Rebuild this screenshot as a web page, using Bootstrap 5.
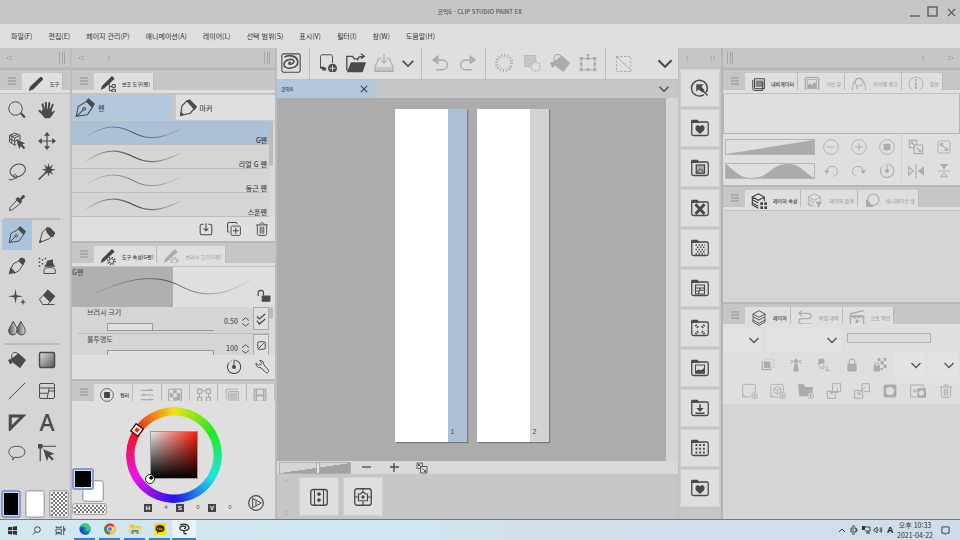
<!DOCTYPE html>
<html lang="ko">
<head>
<meta charset="utf-8">
<meta name="viewport" content="width=device-width, initial-scale=1">
<title>코믹6 - CLIP STUDIO PAINT EX</title>
<link href="https://cdn.jsdelivr.net/npm/bootstrap@5.3.0/dist/css/bootstrap.min.css" rel="stylesheet">
<style>
:root{--bar:#c6c6c6;--panel:#dfdfdf;--body:#d5d5d5;--ink:#4a4a4a;--dim:#ababab;--sel:#abc1d7;--edge:#b5b5b5}
body{font:500 7px/10px "Noto Sans CJK KR",sans-serif;color:#555;background:var(--body);min-height:100vh}
button,select,input{font:inherit;color:inherit;border:0;background:none;padding:0;border-radius:0}
button{display:flex;align-items:center;justify-content:center;flex:none}
svg{fill:none;stroke:currentColor;stroke-width:1.3;flex:none;display:block;overflow:visible}
.fs{fill:currentColor;stroke:none}
.s8{width:8px;height:8px}.s12{width:12px;height:12px}.s14{width:14px;height:14px}.s16{width:16px;height:16px}.s18{width:18px;height:18px}.s20{width:20px;height:20px}
.ink{color:var(--ink)}.dim{color:var(--dim)}
.titlebar{height:24px;background:var(--bar);font-size:6px}
.third{flex:1 1 0}
.winbtns{gap:2px;padding-right:1px}
.winbtns button{width:16px;height:20px}
.menubar{height:24px;background:var(--panel);padding-left:3px;font-weight:400}
.menubar a{color:#333;text-decoration:none;padding:0 8px}
.dockbar{height:20px;background:var(--bar);color:#999;padding:0 5px;border-bottom:1px solid #bebebe}
.grip{width:6px;height:12px;border:solid #a5a5a5;border-width:0 1px;background:linear-gradient(#a5a5a5,#a5a5a5) center/1px 100% no-repeat}
.tools{width:72px;border-right:2px solid #bcbcbc}
.sub{width:205px;background:var(--bar);border-right:2px solid #bcbcbc}
.mats{width:45px;background:var(--bar);border-left:1px solid #bebebe;border-right:2px solid var(--edge)}
.right{width:237px}
.tabs{height:22px;background:var(--bar);border-top:2px solid #b8b8b8;padding-left:4px}
.ham{width:16px;height:18px;margin-right:2px;color:#8c8c8c}
.ptab{height:17px;background:var(--panel);border-right:1px solid #bbb;padding:4px 3px 0 6px;gap:6px;font-size:5px;line-height:8px;color:#aaa;white-space:nowrap;overflow:hidden}
.ptab.on{color:#444;overflow:visible}
.ptab svg{position:relative;z-index:1}
.strip{height:4px;background:var(--panel);border-bottom:1px solid #c2c2c2}
.toolgrid{display:grid;grid-template-columns:30px 30px;row-gap:1px;padding-left:2px}
.toolgrid.first{padding-top:1px}
.toolgrid button{width:30px;height:30px}
.toolgrid .on{background:#abc3db}
.glyph{font:500 23px/24px "Noto Sans",sans-serif}
.rule{height:2px;background:#bbb;margin:0 10px 0 4px}
.swatches{height:29px;padding:0 0 1px 1px}
.swatches .sw{width:20px}
.sw{border:1px solid #aaa;border-radius:3px;padding:1px}
.sw span{display:block;width:100%;height:100%}
.sw.on{border:2px solid #7f9cd8}
.pair{height:34px;margin-bottom:1px}
.pair .sw{width:22px;height:22px;position:absolute}
.pair .front{left:0;top:0}
.pair .back{right:3px;bottom:0}
.clear{width:35px;height:12px}
.check{background:conic-gradient(#777 25%,#fff 0 50%,#777 0 75%,#fff 0) 0 0/4px 4px}
.subtabs{padding:1px 0}
.subtabs button{height:25px;flex:1 1 0;justify-content:flex-start;gap:3px;padding-left:3px;background:var(--panel)}
.subtabs button.on{background:#b0c7dc}
.brushes{height:96px;overflow:hidden;background:var(--body)}
.brushes button{width:100%;height:24px;border-bottom:1px solid #bdbdbd;justify-content:space-between;align-items:flex-end;padding:0 2px 0 12px;line-height:8px;color:#444}
.brushes .on{background:var(--sel)}
.sbar{width:6px;background:#dadada}
.sbar span{display:block;width:4px;background:#bbb;border-radius:2px}
.acts{height:24px;background:var(--panel);gap:10px;padding-right:4px}
.preview{height:40px;background:linear-gradient(90deg,#b0b0b0 50%,var(--panel) 0)}
.props{height:48px;overflow:hidden;background:var(--body)}
.prop{height:27px;border-bottom:1px solid #bbb;margin-left:6px;padding-left:9px}
.meter{width:107px;height:8px;border-bottom:1px solid #999;appearance:none;margin:6px 0 0 20px}
.meter::-webkit-slider-thumb{appearance:none;width:0}
.meter.half{background:linear-gradient(#dfdfdf,#dfdfdf) 1px 1px/44px 7px no-repeat,linear-gradient(#999,#999) 0 0/46px 100% no-repeat}
.meter.full{background:#dfdfdf;border:1px solid #999}
.num{width:24px;text-align:right;margin-top:2px}
.sq{width:16px;height:23px;border:1px solid #aaa;background:var(--panel)}
.cpanel{background:var(--panel);padding-top:6px}
.side{width:38px}
.ring{width:96px;height:96px}
.ring .hue{width:96px;height:96px;border-radius:50%;background:conic-gradient(#eee415,#22e822,#1ee6e6,#2212ee,#ee12ee,#f01515,#eee415);-webkit-mask:radial-gradient(circle,transparent 39px,#000 40px)}
.sv{left:24px;top:24px;width:48px;height:48px;border:1px solid #999;background:linear-gradient(transparent,#000),linear-gradient(90deg,#e8e8e8,#ff1a0a)}
.huemark{left:6px;top:18px;width:10px;height:10px;border:1px solid #111;background:#f21;box-shadow:inset 0 0 0 2px #fff;transform:rotate(37deg)}
.svmark{left:19px;top:67px;width:10px;height:10px;border-radius:50%;border:1px solid #222;background:radial-gradient(circle at 65% 35%,#111 20%,#fff 30%)}
.hsv{width:96px;margin-left:37px;font:6px/9px "Liberation Sans",sans-serif}
.hsv b{background:#444;color:#fff;width:8px;height:8px;text-align:center;line-height:8px;flex:none}
.hsv span{width:24px;padding-left:4px;text-align:center;flex:none}
.topbar{height:32px;background:var(--panel);border-bottom:1px solid #c0c0c0}
.grp{height:31px;border-right:1px solid #bcbcbc;padding:0 3px 0 4px}
.grp button{width:28px;height:30px}
.doctabs{height:18px;background:var(--bar)}
.doctab{width:99px;background:#b0c7dc;font-size:5px;padding:0 4px;color:#444}
.stage{background:#acacac;padding:11px 0 19px;gap:10px}
.page{width:72px;background:#fff;box-shadow:1px 1px 1px #777}
.page span{width:19px;background:#d3d3d3;padding:0 0 6px 3px;font:7px/9px "Liberation Sans",sans-serif;color:#444}
.page.on span{background:var(--sel)}
.vbar{width:12px;background:var(--body)}
.zoombar{height:13px;background:#d9d9d9;gap:10px;padding-left:2px}
.zoombar input{appearance:none;width:72px;height:12px;border:1px solid #b0b0b0;background:linear-gradient(to bottom right,#d5d5d5 50%,#a3a3a3 51%);margin-right:-4px}
.zoombar input::-webkit-slider-thumb{appearance:none;width:4px;height:12px;background:#e5e5e5;border:1px solid #aaa}
.zoombar button{width:18px}
.shelf{height:45px;background:var(--bar);padding:3px 0 3px 6px;gap:4px}
.shelf .big{width:40px;height:39px;background:var(--panel);border:1px solid #d0d0d0}
.mats .mat{width:40px;height:38px;background:var(--panel);border:1px solid #d2d2d2}
.mlist{gap:2px;padding-top:1px}
.navview{height:40px;background:var(--panel);border:1px solid var(--edge);border-top:0}
.navctl{height:51px;background:var(--panel);padding:1px 2px 0;color:var(--dim)}
.navrow{height:24px}
.slope{width:90px;height:16px;border:1px solid #b5b5b5;position:relative;flex:none;margin-right:2px}
.slope input{position:absolute;inset:0;width:100%;height:100%;opacity:0}
.slope svg{width:100%;height:100%}
.navrow button{width:28px}
.gapbox{height:91px}
.lay{background:var(--panel);height:80px;padding:4px 2px 0 0}
.drop{position:relative;background:#e3e3e3;height:24px}
.drop select{width:100%;height:100%;appearance:none}
.drop svg{position:absolute;right:3px;top:7px;pointer-events:none;color:#555}
.opac{width:84px;height:10px;appearance:none;border:1px solid #b0b0b0;background:#dcdcdc}
.opac::-webkit-slider-thumb{appearance:none;width:0}
.lay button{width:28px;height:26px}
.taskbar{height:21px;background:linear-gradient(90deg,#d2e7f0,#cfe5ef 45%,#d3dfeb 55%,#cfdcea);border-top:1px solid #777;color:#333}
.taskbar button{width:24px;height:20px}
.taskbar .run{border-bottom:2px solid #2a83cc;width:21px;margin:0 2px}
.taskbar .run.on{background:#e9f2f7;width:24px;margin:0}
.taskbar .tray button{width:12px}
.taskbar .tray .note{width:22px}
.tray .ime{font:bold 9px/10px "Noto Sans",sans-serif}
.clock{line-height:10px;width:38px;font-weight:400}
</style>
<script src="https://cdn.jsdelivr.net/npm/bootstrap@5.3.0/dist/js/bootstrap.bundle.min.js"></script>
</head>
<body class="d-flex flex-column overflow-hidden">
<svg width="0" height="0" class="position-absolute" aria-hidden="true">
<defs><linearGradient id="gr"><stop stop-color="#555"/><stop offset="1" stop-color="#ddd"/></linearGradient>
<linearGradient id="gd" x1="0" y1="0" x2="1" y2="1"><stop stop-color="#ddd"/><stop offset="1" stop-color="#555"/></linearGradient>
<linearGradient id="st" gradientUnits="userSpaceOnUse" x1="0" x2="100" y1="0" y2="0"><stop stop-color="#555" stop-opacity=".1"/><stop offset=".5" stop-color="#444"/><stop offset="1" stop-color="#555" stop-opacity=".1"/></linearGradient>
<linearGradient id="sp" gradientUnits="userSpaceOnUse" x1="0" x2="165" y1="0" y2="0"><stop stop-color="#555" stop-opacity=".1"/><stop offset=".5" stop-color="#444"/><stop offset="1" stop-color="#555" stop-opacity=".1"/></linearGradient></defs>
<symbol id="ham" viewBox="0 0 8 8"><path d="M0 1h8M0 4h8M0 7h8" stroke-width=".9"/></symbol>
<symbol id="ll" viewBox="0 0 8 8"><path d="M4 2L2 4l2 2M7 2L5 4l2 2" stroke-width=".8"/></symbol>
<symbol id="rr" viewBox="0 0 8 8"><path d="M1 2l2 2-2 2M4 2l2 2-2 2" stroke-width=".8"/></symbol>
<symbol id="l1" viewBox="0 0 8 8"><path d="M5 2L3 4l2 2" stroke-width=".8"/></symbol>
<symbol id="r1" viewBox="0 0 8 8"><path d="M3 2l2 2-2 2" stroke-width=".8"/></symbol>
<symbol id="up" viewBox="0 0 8 8"><path d="M2 5l2-2 2 2" stroke-width=".9"/></symbol>
<symbol id="dd" viewBox="0 0 8 8"><path d="M2 2l2 2 2-2M2 5l2 2 2-2" stroke-width=".9"/></symbol>
<symbol id="chev" viewBox="0 0 16 10"><path d="M2 2l6 6 6-6" stroke-width="1.800"/></symbol>
<symbol id="x" viewBox="0 0 10 10"><path d="M1 1l8 8M9 1L1 9" stroke-width="1.400"/></symbol>
<symbol id="glass" viewBox="0 0 24 24"><circle cx="10" cy="10" r="9"/><path d="M17 16l5.500 6" stroke-width="3"/></symbol>
<symbol id="hand" viewBox="0 0 24 24"><path d="M9 14L6 4.500M11 13l-.6-10.500M14 13l1-10.300M16 14l3.500-9M7 18l-5-5" stroke-width="2.700" stroke-linecap="round"/><path class="fs" d="M6 11l12-1 .5 5 3-2.500 1 1.200-5 7.300-2 2H9l-5-7z"/></symbol>
<symbol id="cube" viewBox="0 0 24 24"><path d="M9 1.500l7 3v7M9 1.500l-7 3v9l7 4 2-1M2 4.500L9 8l7-3.500M9 8v9M5 3v12M2 9l7 3.500L14 10M13 3L6 6"/><path class="fs" d="M11 10l12 5-4 1.700 4 4.300-2 2-4-4.500-2 4z"/></symbol>
<symbol id="move" viewBox="0 0 24 24"><path d="M12 3v18M3 12h18" stroke-width="1.600"/><path class="fs" d="M12 0l4 5H8zM12 24l4-5H8zM0 12l5-4v8zM24 12l-5-4v8z"/></symbol>
<symbol id="lasso" viewBox="0 0 24 24"><ellipse cx="13" cy="10" rx="10.500" ry="8" transform="rotate(-25 13 10)"/><path d="M12 19c1-4-6-5-5-1 1 3 6 3 5 0M9 20c-1 2.500-5 3-8 2"/></symbol>
<symbol id="wand" viewBox="0 0 24 24"><path d="M1 22L12 11" stroke-width="1.800"/><path class="fs" d="M14 0l1.500 5.500L20 2l-2.500 5.500 6 1.500-6 1.500L20 16l-4.500-3.500L14 18l-1.500-5.500L8 16l2.500-5.500L5 9l5.500-1.500L8 2l4.500 3.500z"/></symbol>
<symbol id="drop" viewBox="0 0 24 24"><path d="M12 8l4.500 4.500L6 21l-4 1 .8-4z"/><path class="fs" d="M16 6l3-4c2-2 5 1 3 3l-4 3 1 2-3 3-6-6 3-3z"/></symbol>
<symbol id="pen" viewBox="0 0 24 24"><path d="M1.500 22L4 10l10-6 7 7-6 9zM2 22l8-8"/><circle cx="11" cy="13" r="1.700"/><path class="fs" d="M13 4l3-4 8 7-3 5z"/></symbol>
<symbol id="marker" viewBox="0 0 24 24"><path d="M2 22L6 8l7-6 9 8-7 7z"/><path class="fs" d="M11 2h5l7 7-3 6-4-1-5-6zM1 23l5-2-3-3z"/></symbol>
<symbol id="mpen" viewBox="0 0 24 24"><path d="M2 22L4 9l7-7 11 9-7 8z" stroke-width="1.600"/><path class="fs" d="M10 3l4-3 10 10-3 5zM1 23l6-2-4-4z"/></symbol>
<symbol id="brush" viewBox="0 0 24 24"><path d="M4 16l3-7 8-4 5 5-5 8-7 4"/><path class="fs" d="M15 3c3-4 9-1 8 3l-3 5-6-5zM1 23l2-9 4 3 3 4z"/></symbol>
<symbol id="spray" viewBox="0 0 24 24"><path d="M8 22v-5c0-4 15-4 15 0v5z"/><path class="fs" d="M12 5l8-2v5l3 5H8l3-4zM1 1h2v2H1zM5 3h2v2H5zM1 6h2v2H1zM5 8h2v2H5zM9 1h2v2H9zM1 11h2v2H1z"/></symbol>
<symbol id="spark" viewBox="0 0 24 24"><path class="fs" d="M10 1l1.500 8.500L20 11l-8.500 1.500L10 21l-1.500-8.500L0 11l8.500-1.500zM20 14l1 3.500 3 1-3 1-1 3.500-1-3.500-3-1 3-1z"/></symbol>
<symbol id="eraser" viewBox="0 0 24 24"><path d="M2 15l11-12 9 8-9 11H6zM11 22h11"/><path class="fs" d="M7 10l6-8 10 9-7 8z"/></symbol>
<symbol id="blend" viewBox="0 0 24 24"><path fill="url(#gr)" d="M7 3c3 6 6 9 5 13-1 7-11 7-11 0 0-4 3-7 6-13z"/><path fill="url(#gr)" d="M17 3c3 6 6 9 6 13 0 7-10 7-11 0 0-4 2-7 5-13z"/></symbol>
<symbol id="fill" viewBox="0 0 24 24"><path d="M5 12V6c0-5 8-6 9 0v2"/><path class="fs" d="M0 12l5-2 9-7 10 9-8 11-10-8-3 3z"/></symbol>
<symbol id="grad" viewBox="0 0 24 24"><rect x="2" y="2" width="20" height="20" rx="2" fill="url(#gd)" stroke-width="2"/></symbol>
<symbol id="line" viewBox="0 0 24 24"><path d="M1 23L23 1"/></symbol>
<symbol id="frame" viewBox="0 0 24 24"><rect x="2" y="2" width="20" height="20" rx="2"/><path d="M2 8h20M2 15h11M15 8l-3 14M14 12h8"/></symbol>
<symbol id="ruler" viewBox="0 0 24 24"><path d="M3 4h17L3 21z" stroke-width="4"/></symbol>
<symbol id="balloon" viewBox="0 0 24 24"><path d="M7 18c-9-4-8-15 5-15 14 0 14 15 0 15l-3-.5-3 4z"/></symbol>
<symbol id="correct" viewBox="0 0 24 24"><path d="M3 5v18M5 3h19" stroke-width="1.600"/><path class="fs" d="M0 0h6v6H0zM7 7l15 6-6 2 5 5-2 2-5-5-2 6z"/></symbol>
<symbol id="pencil" viewBox="0 0 24 24"><path class="fs" d="M1 23l2-7L18 2c2-2 6 2 4 4L8 20z"/></symbol>
<symbol id="ptree" viewBox="0 0 24 24"><path class="fs" d="M1 21l2-6L18 0l4 4L7 18z"/><path d="M14 11v11h4M14 16h4M18 13h5v4h-5zM18 20h5v4h-5z" stroke-width="1.500"/></symbol>
<symbol id="pgear" viewBox="0 0 24 24"><path class="fs" d="M1 21l2-6L18 0l4 4L7 18z"/><circle cx="17" cy="18" r="3.500"/><circle cx="17" cy="18" r="5.500" stroke-dasharray="2 2.300" stroke-width="2"/></symbol>
<symbol id="layers" viewBox="0 0 24 24"><path d="M12 1l9 5-9 5-9-5zM3 6v4l9 5 9-5V6M3 11v4l9 5 9-5v-4M3 15v3l9 5 9-5v-3"/></symbol>
<symbol id="lprop" viewBox="0 0 24 24"><path d="M11 1l9 5v6M11 1L2 6l9 5 9-5M2 6v4l9 5M2 11v4l9 5M2 15v3l9 5" stroke-width="1.800"/><path class="fs" d="M14 14h4v4h-4zM20 14h4v4h-4zM14 20h4v4h-4zM20 20h4v4h-4z"/></symbol>
<symbol id="lfind" viewBox="0 0 24 24"><path d="M11 1l9 5v6M11 1L2 6l9 5 9-5M2 6v4l9 5M2 11v4l9 5M2 15v3l9 5"/><path class="fs" d="M13 13h10l-4 5v5l-3-2v-3z"/></symbol>
<symbol id="cel" viewBox="0 0 24 24"><circle cx="14" cy="10" r="8.500" stroke-width="1.800"/><path class="fs" d="M3 22V9l12 13z"/></symbol>
<symbol id="navi" viewBox="0 0 24 24"><path d="M3 5v15c0 2 1 3 3 3h14V8M6 20V3h17v17z" stroke-width="1.700"/><rect class="fs" x="8" y="6" width="13" height="11" opacity=".6"/></symbol>
<symbol id="pic" viewBox="0 0 24 24"><rect x="2" y="2" width="20" height="21" rx="2" stroke-width="2"/><rect x="5" y="5" width="14" height="14"/><path class="fs" d="M5 19v-5l4-3 3 3 4-5 3 3v7z"/></symbol>
<symbol id="ibank" viewBox="0 0 24 24"><circle cx="12" cy="9" r="6"/><path d="M2 22c0-9 2-16 10-19 8 3 10 10 10 19M9 20v-6" stroke-width="1.600"/></symbol>
<symbol id="info" viewBox="0 0 24 24"><circle cx="12" cy="12" r="10.500"/><path d="M12 10v8M10 10h2M10 18h4" stroke-width="2"/><circle class="fs" cx="12" cy="6" r="1.500"/></symbol>
<symbol id="hist" viewBox="0 0 24 24"><path d="M4 5h12c7 0 7 8 0 8H8c-7 0-7 8 0 8h14M7 1L3 5l4 4" stroke-width="1.700"/></symbol>
<symbol id="clap" viewBox="0 0 24 24"><path d="M2 9h20v15H2zM1 6l21-5M2 11l3-2 3 3 3-3 3 3 3-3 3 3" stroke-width="2"/><path class="fs" d="M10 13l6 4-6 4z"/></symbol>
<symbol id="dl" viewBox="0 0 24 24"><path d="M8 4H5C3 4 2 5 2 7v12c0 2 1 3 3 3h14c2 0 3-1 3-3V7c0-2-1-3-3-3h-3M12 2v13M8 11l4 4 4-4" stroke-width="1.800"/></symbol>
<symbol id="dup" viewBox="0 0 24 24"><rect x="7" y="7" width="16" height="16" rx="2" stroke-width="1.600"/><path d="M4 17H3c-1 0-2-1-2-2V3c0-1 1-2 2-2h12c1 0 2 1 2 2v1M15 10v10M10 15h10" stroke-width="1.800"/></symbol>
<symbol id="trash" viewBox="0 0 24 24"><path d="M2 5h20M8 5c0-5 8-5 8 0M4 5v15c0 2 1 3 3 3h10c2 0 3-1 3-3V5M9 8v12M12 8v12M15 8v12" stroke-width="1.600"/></symbol>
<symbol id="lock" viewBox="0 0 24 24"><path d="M2 12V6c0-5 9-5 9 0v5" stroke-width="2"/><rect class="fs" x="8" y="11" width="15" height="11" rx="1"/></symbol>
<symbol id="lk" viewBox="0 0 24 24"><path d="M7 11V7c0-7 10-7 10 0v4" stroke-width="2"/><rect class="fs" x="4" y="10" width="16" height="13" rx="2"/></symbol>
<symbol id="spin" viewBox="0 0 10 14"><path d="M0 5l5-4 5 4M0 9l5 4 5-4"/></symbol>
<symbol id="chk2" viewBox="0 0 12 14"><path d="M1 4l3 3 7-6M1 9l3 4 7-6" stroke-width="1.500"/></symbol>
<symbol id="no" viewBox="0 0 12 12"><rect x="1" y="1" width="10" height="10" rx="2"/><path d="M2 10l8-8" stroke-width="1.200"/></symbol>
<symbol id="dial" viewBox="0 0 24 24"><path d="M14 2a10 10 0 1 1-10 4" stroke-width="1.600"/><path d="M12 1v10M5 5l1-1M8 3l1-.5" stroke-width="1.500"/><circle class="fs" cx="12" cy="12" r="3"/></symbol>
<symbol id="wrench" viewBox="0 0 24 24"><path d="M8 1c4-1 8 3 7 7l8 9c2 3-3 7-5 4l-8-8c-5 1-9-3-8-8l4 4 4-1 1-4z" stroke-width="1.700"/></symbol>
<symbol id="wheel" viewBox="0 0 24 24"><circle cx="12" cy="12" r="11"/><rect class="fs" x="7" y="7" width="10" height="10" rx="1"/></symbol>
<symbol id="bars" viewBox="0 0 24 24"><path d="M1 4h22M1 12h22M1 20h22" stroke-width="2"/><path class="fs" d="M15 5l3-4 3 4zM4 13l3-4 3 4zM15 21l3-4 3 4z"/></symbol>
<symbol id="cset" viewBox="0 0 24 24"><rect x="1" y="2" width="22" height="21" rx="3" stroke-width="2"/><path class="fs" d="M3 9h6v7H3zM9 4h6v5H9zM15 9h6v12h-6zM9 16h6v6H9z"/></symbol>
<symbol id="mid" viewBox="0 0 24 24"><path d="M1 2h7v7H1zM16 2h7v7h-7zM1 16h7v7H1zM16 16h7v7h-7zM8 5h8M4 9v7M20 9v7" stroke-width="2"/></symbol>
<symbol id="approx" viewBox="0 0 24 24"><path d="M2 20V2h20M6 24V6h17v18" stroke-width="1.500"/><path class="fs" d="M8 8h13v14H8z" opacity=".6"/></symbol>
<symbol id="film" viewBox="0 0 24 24"><path class="fs" d="M1 1h22v23H1zM7 3v8h10V3zM7 14v8h10v-8z" fill-rule="evenodd"/><path d="M4 2v21M20 2v21" stroke="#dfdfdf" stroke-dasharray="2 2" stroke-width="2"/></symbol>
<symbol id="play" viewBox="0 0 24 24"><circle cx="12" cy="12" r="11" stroke-width="1.800"/><path d="M7 5v14l13-7zM12 8v8" stroke-width="1.500"/></symbol>
<symbol id="csp" viewBox="0 0 24 24"><rect x="1" y="1" width="22" height="22" rx="2"/><path d="M4 5c6-3 15-2 16 5 1 6-6 9-12 8-6-1-6-8 1-10 6-2 9 3 4 5-4 2-5-2-1-2" stroke-width="1.900"/></symbol>
<symbol id="newd" viewBox="0 0 24 24"><path d="M18 12V3c0-1-1-2-2-2H4C3 1 2 2 2 3v16h8"/><path class="fs" d="M2 17h5l3 5H5z"/><circle class="fs" cx="18" cy="19" r="6"/><path d="M18 15v8M14 19h8" stroke="#dfdfdf" stroke-width="1.200"/></symbol>
<symbol id="open" viewBox="0 0 24 24"><path d="M1 21V4h7l2 3h4M14 9c0-4 2-5 7-5M18 1l4 3-4 3" stroke-width="1.600"/><path class="fs" d="M6 11h18l-4 12H1z"/></symbol>
<symbol id="save" viewBox="0 0 24 24"><path d="M9 6H6L1 17v5h22v-5L18 6h-3M12 1v11M9 9l3 3 3-3"/><path class="fs" d="M1 17h22v5H1z" opacity=".5"/></symbol>
<symbol id="undo" viewBox="0 0 24 24"><path d="M5 8h10c9 0 9 13 0 13H7" stroke-width="1.800"/><path class="fs" d="M1 8l9-7v13z"/></symbol>
<symbol id="redo" viewBox="0 0 24 24"><path d="M19 8H9C0 8 0 21 9 21h8" stroke-width="1.800"/><path class="fs" d="M23 8l-9-7v13z"/></symbol>
<symbol id="rays" viewBox="0 0 24 24"><circle cx="12" cy="12" r="9" stroke-width="4" stroke-dasharray="1.300 2.234"/></symbol>
<symbol id="shade" viewBox="0 0 24 24"><rect x="2" y="2" width="15" height="15" stroke-dasharray="2 1.500" fill="currentColor" fill-opacity=".5"/><circle cx="17" cy="17" r="6" fill="#dfdfdf" stroke-width="3" stroke-dasharray="1 2.140"/></symbol>
<symbol id="trans" viewBox="0 0 24 24"><rect x="3" y="6" width="18" height="15"/><path d="M12 6V1"/><path class="fs" d="M1 4h4v4H1zM10 4h4v4h-4zM19 4h4v4h-4zM1 19h4v4H1zM10 19h4v4h-4zM19 19h4v4h-4zM1 12h4v3H1zM19 12h4v3h-4zM10 0h4v2h-4z"/></symbol>
<symbol id="desel" viewBox="0 0 24 24"><rect x="2" y="2" width="19" height="20" stroke-dasharray="3 2"/><path d="M1 1l22 21"/></symbol>
<symbol id="fold" viewBox="0 0 24 24"><rect x="1" y="4" width="22" height="18" rx="2" stroke-width="1.700"/><path class="fs" d="M0 6V3c0-1 1-2 2-2h7l2 4H2z"/></symbol>
<symbol id="heart" viewBox="0 0 24 24"><path class="fs" d="M12 20c-3-3-7-5-6-9 1-4 5-3 6-1 1-2 5-3 6 1 1 4-3 6-6 9z"/></symbol>
<symbol id="fit2" viewBox="0 0 24 24"><path d="M13 9V2H2v11h7M9 9h13v13H9zM5 5l6 6M5 8V5h3M13 13l6 6M16 19h3v-3" stroke-width="1.700"/></symbol>
<symbol id="fit1" viewBox="0 0 24 24"><rect x="3" y="3" width="18" height="18" rx="2"/><path d="M8 8l8 8M7 11V7h4M17 13v4h-4" stroke-width="1.700"/></symbol>
<symbol id="minus" viewBox="0 0 24 24"><circle cx="12" cy="12" r="11"/><path d="M6 12h12"/></symbol>
<symbol id="plus" viewBox="0 0 24 24"><circle cx="12" cy="12" r="11"/><path d="M6 12h12M12 6v12"/></symbol>
<symbol id="rotl" viewBox="0 0 24 24"><path d="M5 12a9 8.500 0 1 1 11 9" stroke-width="1.700"/><path class="fs" d="M0 11h9l-4 6z"/></symbol>
<symbol id="rotr" viewBox="0 0 24 24"><path d="M19 12a9 8.500 0 1 0-11 9" stroke-width="1.700"/><path class="fs" d="M24 11h-9l4 6z"/></symbol>
<symbol id="fliph" viewBox="0 0 24 24"><path d="M12 1v22M1 6v12l7-6z" stroke-width="1.600"/><path class="fs" d="M24 5v14l-9-7z"/></symbol>
<symbol id="flipv" viewBox="0 0 24 24"><path d="M2 12h20M6 22h12l-6-7z" stroke-width="1.600"/><path class="fs" d="M5 0h14l-7 9z"/></symbol>
<symbol id="clip" viewBox="0 0 24 24"><rect class="fs" x="5" y="6" width="11" height="11"/><rect x="7" y="2" width="15" height="15" stroke-dasharray="2 2"/><path d="M4 7H2v13h14v-2" stroke-width="2"/></symbol>
<symbol id="light" viewBox="0 0 24 24"><path class="fs" d="M10 9h4l3 14H7zM9 4l3-3 3 3v4H9z"/><path d="M2 3l6 3-6 3M22 3l-6 3 6 3" stroke-width="1.600"/></symbol>
<symbol id="draft" viewBox="0 0 24 24"><path d="M3 2h9v9l-4 8-5-8zM10 19c7-9 11-4 5 2 4 2 5-2 8 1" stroke-width="1.600"/><path class="fs" d="M3 2h9v7L3 11z"/></symbol>
<symbol id="lkt" viewBox="0 0 24 24"><path class="fs" d="M8 0h5v5H8zM18 0h5v5h-5zM13 5h5v6h-5zM18 11h5v6h-5zM13 17h4v4h-4zM1 13h11v10H1z"/><path d="M3 14v-3c0-4 7-4 7 0v3" stroke-width="1.800"/></symbol>
<symbol id="nlay" viewBox="0 0 24 24"><path d="M20 14V4c0-1-1-2-2-2H3C2 2 1 3 1 4v17h12M1 17l5 4"/><circle cx="19" cy="19" r="4.500"/><path d="M19 16v6M16 19h6"/></symbol>
<symbol id="nfol" viewBox="0 0 24 24"><path class="fs" d="M0 2h9l2 4h11v9l-7 5H2z"/><circle cx="19" cy="19" r="4.500" fill="#dfdfdf"/><path d="M19 16v6M16 19h6"/></symbol>
<symbol id="xfer" viewBox="0 0 24 24"><path d="M8 12H2v11h12v-7M10 1h12v12H10zM17 8v6H7M10 11l-4 3 4 3" stroke-width="1.500"/></symbol>
<symbol id="merge" viewBox="0 0 24 24"><path d="M12 9V1h11v12h-8M1 11h12v12H1zM17 6L6 17M6 12v5h5" stroke-width="1.500"/></symbol>
<symbol id="mask" viewBox="0 0 24 24"><path class="fs" fill-rule="evenodd" d="M3 1h18l2 2v18l-2 2H3l-2-2V3zM12 5a7 7 0 1 0 0 14 7 7 0 0 0 0-14z"/></symbol>
<symbol id="amask" viewBox="0 0 24 24"><path d="M20 7V3H1v18h9M5 12h8M8 9l-3 3 3 3" stroke-width="1.500"/><path class="fs" fill-rule="evenodd" d="M11 8h13v14H11zM17 11a4 4 0 1 0 .1 0z"/></symbol>
</svg>

<header class="titlebar d-flex align-items-center">
<span class="third"></span><span>코믹6 - CLIP STUDIO PAINT EX</span>
<div class="winbtns third d-flex justify-content-end">
<button aria-label="최소화"><svg class="s12" viewBox="0 0 12 12"><path d="M1 10h10"/></svg></button>
<button aria-label="최대화"><svg class="s12" viewBox="0 0 12 12"><rect x="1" y="1" width="9" height="9"/></svg></button>
<button aria-label="닫기"><svg width="9" height="9"><use href="#x"/></svg></button></div>
</header>
<nav class="menubar d-flex align-items-center"><a href="#">파일(F)</a><a href="#">편집(E)</a><a href="#">페이지 관리(P)</a><a href="#">애니메이션(A)</a><a href="#">레이어(L)</a><a href="#">선택 범위(S)</a><a href="#">표시(V)</a><a href="#">필터(I)</a><a href="#">창(W)</a><a href="#">도움말(H)</a></nav>

<main class="d-flex flex-fill">
<aside class="tools d-flex flex-column flex-shrink-0">
<div class="dockbar d-flex align-items-center justify-content-between"><svg class="s8"><use href="#ll"/></svg><span class="grip"></span></div>
<div class="tabs d-flex align-items-end"><button class="ham" aria-label="메뉴"><svg class="s8"><use href="#ham"/></svg></button><button class="ptab on"><svg class="s16"><use href="#pencil"/></svg>도구</button></div>
<div class="strip"></div>
<div class="toolgrid first ink">
<button aria-label="돋보기"><svg class="s18"><use href="#glass"/></svg></button><button aria-label="이동"><svg class="s18"><use href="#hand"/></svg></button>
<button aria-label="조작"><svg class="s18"><use href="#cube"/></svg></button><button aria-label="레이어 이동"><svg class="s18"><use href="#move"/></svg></button>
<button aria-label="선택 범위"><svg class="s18"><use href="#lasso"/></svg></button><button aria-label="자동 선택"><svg class="s18"><use href="#wand"/></svg></button>
<button aria-label="스포이트"><svg class="s18"><use href="#drop"/></svg></button></div>
<div class="rule"></div>
<div class="toolgrid ink">
<button class="on" aria-label="펜"><svg class="s18"><use href="#pen"/></svg></button><button aria-label="연필"><svg class="s18"><use href="#marker"/></svg></button>
<button aria-label="붓"><svg class="s18"><use href="#brush"/></svg></button><button aria-label="에어브러시"><svg class="s18"><use href="#spray"/></svg></button>
<button aria-label="데코레이션"><svg class="s18"><use href="#spark"/></svg></button><button aria-label="지우개"><svg class="s18"><use href="#eraser"/></svg></button>
<button aria-label="색 혼합"><svg class="s18"><use href="#blend"/></svg></button></div>
<div class="rule"></div>
<div class="toolgrid ink">
<button aria-label="채우기"><svg class="s18"><use href="#fill"/></svg></button><button aria-label="그라데이션"><svg class="s18"><use href="#grad"/></svg></button>
<button aria-label="도형"><svg class="s18"><use href="#line"/></svg></button><button aria-label="컷 테두리"><svg class="s18"><use href="#frame"/></svg></button>
<button aria-label="자"><svg class="s18"><use href="#ruler"/></svg></button><button aria-label="텍스트" class="glyph">A</button>
<button aria-label="말풍선"><svg class="s18"><use href="#balloon"/></svg></button><button aria-label="선 수정"><svg class="s18"><use href="#correct"/></svg></button></div>
<div class="swatches d-flex mt-auto gap-1"><button class="sw on" aria-label="메인 컬러"><span class="bg-black"></span></button><button class="sw" aria-label="서브 컬러"><span class="bg-white"></span></button><button class="sw" aria-label="투명색"><span class="check"></span></button></div>
</aside>

<aside class="sub d-flex flex-column flex-shrink-0">
<div class="dockbar d-flex align-items-center"><svg class="s8 me-3"><use href="#ll"/></svg><svg class="s8 ms-1"><use href="#l1"/></svg><span class="grip ms-auto"></span></div>
<div class="tabs d-flex align-items-end"><button class="ham" aria-label="메뉴"><svg class="s8"><use href="#ham"/></svg></button><button class="ptab on"><svg class="s16"><use href="#ptree"/></svg>보조 도구(펜)</button></div>
<div class="strip"></div>
<div class="subtabs d-flex gap-1 ink"><button class="on"><svg class="s20"><use href="#pen"/></svg>펜</button><button><svg class="s18"><use href="#mpen"/></svg>마커</button></div>
<div class="d-flex"><div class="brushes flex-fill">
<button class="on"><svg width="100" height="22" viewBox="0 0 100 22"><path d="M2 15C22 2 34 3 50 11S78 16 97 7" stroke="url(#st)" stroke-width="1"/></svg>G펜</button>
<button><svg width="100" height="22" viewBox="0 0 100 22"><path d="M2 15C22 2 34 3 50 11S78 16 97 7" stroke="url(#st)" stroke-width="1.200"/></svg>리얼 G 펜</button>
<button><svg width="100" height="22" viewBox="0 0 100 22"><path d="M2 15C22 2 34 3 50 11S78 16 97 7" stroke="url(#st)" stroke-width=".7"/></svg>둥근 펜</button>
<button><svg width="100" height="22" viewBox="0 0 100 22"><path d="M2 15C22 2 34 3 50 11S78 16 97 7" stroke="url(#st)" stroke-width="1.200"/></svg>스푼펜</button></div>
<div class="sbar"><span style="height:45px"></span></div></div>
<div class="acts d-flex align-items-center justify-content-end ink"><button class="s18" aria-label="가져오기"><svg class="s14"><use href="#dl"/></svg></button><button class="s18" aria-label="복제"><svg class="s14"><use href="#dup"/></svg></button><button class="s18" aria-label="삭제"><svg class="s14"><use href="#trash"/></svg></button></div>

<div class="tabs d-flex align-items-end"><button class="ham" aria-label="메뉴"><svg class="s8"><use href="#ham"/></svg></button><button class="ptab on"><svg class="s16"><use href="#pgear"/></svg>도구 속성[G펜]</button><button class="ptab"><svg class="s16"><use href="#pgear"/></svg>브러시 크기[G펜]</button></div>
<div class="strip"></div>
<div class="preview d-flex position-relative"><span>G펜</span><svg class="flex-fill" height="40" viewBox="0 0 165 40"><path d="M9 27C50 7 76 9 95 19S135 32 165 13" stroke="url(#sp)" stroke-width=".9"/></svg><button class="align-self-end p-1 ink" aria-label="잠금"><svg class="s14"><use href="#lock"/></svg></button></div>
<div class="props d-flex"><div class="flex-fill">
<div class="prop d-flex"><div class="flex-fill d-flex flex-column"><label for="bs">브러시 크기</label><input id="bs" type="range" class="meter half" value="40"></div><input class="num" aria-label="브러시 크기 값" value="0.50"><svg class="mx-1 mt-2 ink" width="7" height="14"><use href="#spin"/></svg><button class="sq ink" aria-label="다이내믹스"><svg width="10" height="12"><use href="#chk2"/></svg></button></div>
<div class="prop d-flex"><div class="flex-fill d-flex flex-column"><label for="op">불투명도</label><input id="op" type="range" class="meter full" value="100"></div><input class="num" aria-label="불투명도 값" value="100"><svg class="mx-1 mt-2 ink" width="7" height="14"><use href="#spin"/></svg><button class="sq ink" aria-label="다이내믹스 없음"><svg width="9" height="9"><use href="#no"/></svg></button></div></div>
<div class="sbar"><span style="height:12px"></span></div></div>
<div class="acts d-flex align-items-center justify-content-end ink"><button class="s18" aria-label="초기화"><svg class="s16"><use href="#dial"/></svg></button><button class="s18" aria-label="설정"><svg class="s14"><use href="#wrench"/></svg></button></div>

<div class="tabs d-flex align-items-end"><button class="ham" aria-label="메뉴"><svg class="s8"><use href="#ham"/></svg></button><button class="ptab on"><svg class="s14"><use href="#wheel"/></svg>컬러</button>
<button class="ptab flex-fill px-1" aria-label="컬러 슬라이더"><svg class="s14"><use href="#bars"/></svg></button><button class="ptab flex-fill px-1" aria-label="컬러 세트"><svg class="s14"><use href="#cset"/></svg></button><button class="ptab flex-fill px-1" aria-label="중간색"><svg class="s14"><use href="#mid"/></svg></button><button class="ptab flex-fill px-1" aria-label="유사색"><svg class="s14"><use href="#approx"/></svg></button><button class="ptab flex-fill px-1" aria-label="컬러 히스토리"><svg class="s14"><use href="#film"/></svg></button></div>
<div class="cpanel d-flex flex-fill">
<div class="side d-flex flex-column justify-content-end pb-1"><div class="pair position-relative"><button class="sw back" aria-label="서브 컬러"><span class="bg-white"></span></button><button class="sw on front" aria-label="메인 컬러"><span class="bg-black"></span></button></div><button class="sw clear" aria-label="투명색"><span class="check"></span></button></div>
<div class="flex-fill"><div class="ring position-relative mx-auto"><div class="hue"></div><div class="sv position-absolute"></div><div class="huemark position-absolute"></div><div class="svmark position-absolute"></div></div>
<div class="hsv d-flex align-items-center"><b>H</b><span>4</span><b>S</b><span>0</span><b>V</b><span>0</span></div></div>
<div class="side d-flex align-items-end pb-1"><button class="ink mb-1 ms-2" aria-label="컬러 변경"><svg class="s16"><use href="#play"/></svg></button></div>
</div>
</aside>

<section class="d-flex flex-column flex-fill">
<div class="topbar d-flex align-items-center ink">
<div class="grp d-flex px-0"><button aria-label="CLIP STUDIO" class="px-1 w-auto"><svg class="s20 me-1"><use href="#csp"/></svg></button></div>
<div class="grp d-flex"><button aria-label="새로 만들기"><svg class="s18"><use href="#newd"/></svg></button><button aria-label="열기"><svg class="s20"><use href="#open"/></svg></button><button class="dim" aria-label="저장"><svg class="s20"><use href="#save"/></svg></button><button style="width:20px" aria-label="더 보기"><svg width="14" height="9"><use href="#chev"/></svg></button></div>
<div class="grp d-flex dim"><button aria-label="실행 취소"><svg class="s18"><use href="#undo"/></svg></button><button aria-label="다시 실행"><svg class="s18"><use href="#redo"/></svg></button></div>
<div class="grp d-flex dim"><button aria-label="지우기"><svg class="s20"><use href="#rays"/></svg></button><button aria-label="선택 외 지우기"><svg class="s18"><use href="#shade"/></svg></button><button aria-label="채우기"><svg class="s20"><use href="#fill"/></svg></button><button aria-label="변형"><svg class="s18"><use href="#trans"/></svg></button></div>
<div class="d-flex flex-fill dim ps-1"><button style="width:28px" aria-label="선택 해제"><svg class="s18"><use href="#desel"/></svg></button></div>
<button class="me-1" aria-label="명령 더 보기"><svg width="18" height="11"><use href="#chev"/></svg></button>
</div>
<div class="doctabs d-flex justify-content-between"><div class="doctab d-flex align-items-center justify-content-between"><span>코믹6</span><button class="me-1" aria-label="닫기"><svg class="s8"><use href="#x"/></svg></button></div><button class="me-2 ink" aria-label="탭 목록"><svg width="12" height="8"><use href="#chev"/></svg></button></div>
<div class="d-flex flex-fill"><div class="stage d-flex flex-fill justify-content-center">
<div class="page on d-flex justify-content-end"><span class="d-flex align-items-end">1</span></div><div class="page d-flex justify-content-end"><span class="d-flex align-items-end">2</span></div></div><div class="vbar"></div></div>
<div class="zoombar d-flex align-items-center ink"><input type="range" aria-label="확대/축소" value="54"><button aria-label="축소"><svg width="9" height="9"><path d="M0 4h9"/></svg></button><button aria-label="확대"><svg width="9" height="9"><path d="M0 4h9M4 0v9"/></svg></button><button aria-label="맞춤"><svg class="s12"><use href="#fit2"/></svg></button></div>
<div class="shelf d-flex"><div class="d-flex flex-column justify-content-between me-1 dim"><svg class="s8"><use href="#up"/></svg><svg class="s8"><use href="#dd"/></svg></div>
<button class="big ink" aria-label="타임라인"><svg class="s18" viewBox="0 0 24 24"><rect x="1" y="2" width="22" height="21" rx="3" stroke-width="1.800"/><path d="M6 2v21M18 2v21" stroke-width="1.500"/><circle class="fs" cx="12" cy="8" r="2.500"/><circle class="fs" cx="12" cy="16" r="2.500"/></svg></button>
<button class="big ink" aria-label="촬영"><svg class="s18" viewBox="0 0 24 24"><rect x="1" y="1" width="22" height="22" rx="3" stroke-width="1.800"/><path d="M12 1v6M12 18v5M1 12h5M18 12h5M6 8h3l1-2h4l1 2h3v9H6z" stroke-width="1.600"/><circle class="fs" cx="12" cy="12" r="2.200"/></svg></button></div>
</section>

<aside class="mats flex-shrink-0">
<div class="dockbar d-flex align-items-center justify-content-between px-1"><svg class="s8"><use href="#l1"/></svg><svg class="s8"><use href="#rr"/></svg></div>
<div class="mlist d-flex flex-column align-items-center ink">
<button class="mat" aria-label="빠른 액세스"><svg class="s18" viewBox="0 0 24 24"><path d="M20 18a10.500 10.500 0 1 0-3 3M15 15l7 7" stroke-width="2"/><path class="fs" d="M7 7h10l-3 3 4 5-3 3-5-4-3 3z"/></svg></button>
<button class="mat" aria-label="즐겨찾기"><svg class="s18" viewBox="0 0 24 24"><use href="#fold"/><use href="#heart"/></svg></button>
<button class="mat" aria-label="소재 이미지"><svg class="s18" viewBox="0 0 24 24"><use href="#fold"/><rect x="7" y="8" width="11" height="11" fill="#aaa" stroke-width="1.700"/><path d="M9 18c0-6 7-6 7 0"/></svg></button>
<button class="mat" aria-label="소재 기타"><svg class="s18" viewBox="0 0 24 24"><use href="#fold"/><path d="M6 7l12 13M18 7L6 20" stroke-width="4"/></svg></button>
<button class="mat" aria-label="패턴"><svg class="s18" viewBox="0 0 24 24"><use href="#fold"/><path d="M6 8h13M8 11h12M6 14h13M8 17h12M6 20h13" stroke-dasharray="2 2" stroke-width="2"/></svg></button>
<button class="mat" aria-label="만화 소재"><svg class="s18" viewBox="0 0 24 24"><use href="#fold"/><path d="M6 8h12v12H6zM6 12h12M6 16h5M12 12l-2 8M12 15h6" stroke-width="1.500"/></svg></button>
<button class="mat" aria-label="포즈"><svg class="s18" viewBox="0 0 24 24"><use href="#fold"/><path d="M6 8l4 4M18 8l-4 4M6 20l4-4M18 20l-4-4" stroke-width="3" stroke-dasharray="2 1"/></svg></button>
<button class="mat" aria-label="배경"><svg class="s18" viewBox="0 0 24 24"><use href="#fold"/><rect x="6" y="8" width="12" height="11"/><path class="fs" d="M6 19v-3l4-2 3 1 5-3v7z"/></svg></button>
<button class="mat" aria-label="다운로드"><svg class="s18" viewBox="0 0 24 24"><use href="#fold"/><path d="M12 7v8M6 19h12" stroke-width="2"/><path class="fs" d="M7 12h10l-5 5z"/></svg></button>
<button class="mat" aria-label="모든 소재"><svg class="s18" viewBox="0 0 24 24"><use href="#fold"/><path d="M6 8h14M6 13h14M6 18h14" stroke-dasharray="2.500 2.500" stroke-width="2.500"/></svg></button>
<button class="mat" aria-label="내 소재"><svg class="s18" viewBox="0 0 24 24"><use href="#fold"/><use href="#heart"/></svg></button>
</div></aside>

<aside class="right d-flex flex-column flex-shrink-0">
<div class="dockbar d-flex align-items-center ps-1"><span class="grip me-auto"></span><svg class="s8 me-3"><use href="#r1"/></svg><svg class="s8 ms-1"><use href="#rr"/></svg></div>
<div class="tabs d-flex align-items-end"><button class="ham" aria-label="메뉴"><svg class="s8"><use href="#ham"/></svg></button><button class="ptab on"><svg class="s14"><use href="#navi"/></svg>내비게이터</button><button class="ptab"><svg class="s16"><use href="#pic"/></svg>서브 뷰</button><button class="ptab"><svg class="s16"><use href="#ibank"/></svg>아이템 뱅크</button><button class="ptab"><svg class="s16"><use href="#info"/></svg>정보</button></div>
<div class="strip"></div>
<div class="navview"></div>
<div class="navctl">
<div class="navrow d-flex align-items-center"><label class="slope"><svg viewBox="0 0 90 16" preserveAspectRatio="none"><path class="fs" d="M0 16L90 0v16z"/></svg><input type="range" aria-label="배율"></label>
<button aria-label="축소"><svg class="s16"><use href="#minus"/></svg></button><button aria-label="확대"><svg class="s16"><use href="#plus"/></svg></button><button aria-label="100%"><svg class="s16"><use href="#wheel"/></svg></button><span class="vr"></span><button aria-label="피팅"><svg class="s16"><use href="#fit2"/></svg></button><button aria-label="전체 표시"><svg class="s16"><use href="#fit1"/></svg></button></div>
<div class="navrow d-flex align-items-center"><label class="slope"><svg viewBox="0 0 90 16" preserveAspectRatio="none"><path class="fs" d="M0 0C12 12 17 16 25 16H0zM25 16C47 16 44 0 64 0c12 0 14 8 26 16z"/></svg><input type="range" aria-label="회전"></label>
<button aria-label="왼쪽 회전"><svg class="s14"><use href="#rotl"/></svg></button><button aria-label="오른쪽 회전"><svg class="s14"><use href="#rotr"/></svg></button><button aria-label="회전 초기화"><svg class="s16"><use href="#dial"/></svg></button><span class="vr"></span><button aria-label="좌우 반전"><svg class="s16"><use href="#fliph"/></svg></button><button aria-label="상하 반전"><svg class="s14"><use href="#flipv"/></svg></button></div></div>
<div class="tabs d-flex align-items-end"><button class="ham" aria-label="메뉴"><svg class="s8"><use href="#ham"/></svg></button><button class="ptab on"><svg class="s16"><use href="#lprop"/></svg>레이어 속성</button><button class="ptab"><svg class="s16"><use href="#lfind"/></svg>레이어 검색</button><button class="ptab"><svg class="s16"><use href="#cel"/></svg>애니메이션 셀</button></div>
<div class="strip"></div><div class="gapbox"></div>
<div class="tabs d-flex align-items-end"><button class="ham" aria-label="메뉴"><svg class="s8"><use href="#ham"/></svg></button><button class="ptab on"><svg class="s16"><use href="#layers"/></svg>레이어</button><button class="ptab"><svg class="s16"><use href="#hist"/></svg>작업 내역</button><button class="ptab"><svg class="s16"><use href="#clap"/></svg>오토 액션</button></div>
<div class="lay dim">
<div class="d-flex align-items-center"><div class="drop" style="width:40px"><select aria-label="팔레트 컬러"><option></option></select><svg class="s12" viewBox="0 0 16 16"><path d="M2 4l6 6 6-6" stroke-width="1.800"/></svg></div><div class="drop" style="width:75px;margin:0 6px 0 3px"><select aria-label="합성 모드"><option></option></select><svg class="s12" viewBox="0 0 16 16"><path d="M2 4l6 6 6-6" stroke-width="1.800"/></svg></div><input class="opac mb-1" type="range" aria-label="불투명도"></div>
<div class="d-flex align-items-center" style="padding-left:31px"><button aria-label="클리핑"><svg class="s14"><use href="#clip"/></svg></button><button aria-label="참조"><svg class="s14"><use href="#light"/></svg></button><button aria-label="밑그림"><svg class="s14"><use href="#draft"/></svg></button><button aria-label="잠금"><svg class="s14"><use href="#lk"/></svg></button><button aria-label="투명 픽셀 잠금"><svg class="s14"><use href="#lkt"/></svg></button><div class="drop flex-fill"><select aria-label="마스크"><option></option></select><svg class="s12" viewBox="0 0 16 16"><path d="M2 4l6 6 6-6" stroke-width="1.800"/></svg></div><div class="drop flex-fill" style="margin-left:2px"><select aria-label="자 범위"><option></option></select><svg class="s12" viewBox="0 0 16 16"><path d="M2 4l6 6 6-6" stroke-width="1.800"/></svg></div></div>
<div class="d-flex align-items-center" style="padding-left:13px"><button aria-label="새 래스터"><svg class="s16"><use href="#nlay"/></svg></button><button aria-label="새 벡터"><svg class="s16" viewBox="0 0 24 24"><use href="#nlay"/><path d="M6 8l5-3 5 3v6l-5 3-5-3zM6 8l5 3 5-3M11 11v5"/></svg></button><button aria-label="새 폴더"><svg class="s16"><use href="#nfol"/></svg></button><button aria-label="전사"><svg class="s16"><use href="#xfer"/></svg></button><button aria-label="결합"><svg class="s16"><use href="#merge"/></svg></button><button aria-label="마스크 작성"><svg class="s14"><use href="#mask"/></svg></button><button aria-label="마스크 적용"><svg class="s16"><use href="#amask"/></svg></button><button aria-label="삭제"><svg class="s14"><use href="#trash"/></svg></button></div>
</div>
<div class="flex-fill"></div>
</aside>
</main>

<footer class="taskbar d-flex align-items-center">
<button aria-label="시작"><svg width="9" height="9" viewBox="0 0 10 10"><path class="fs" d="M0 1.500l4.500-.7v4H0zM5.200.7L10 0v4.800H5.200zM0 5.500h4.500v4L0 9zM5.200 5.500H10V10l-4.800-.7z"/></svg></button>
<button aria-label="검색"><svg width="9" height="9" viewBox="0 0 10 10"><circle cx="6" cy="4" r="3.200" stroke-width="1"/><path d="M4 6.500L1 9.500" stroke-width="1"/></svg></button>
<button aria-label="작업 보기"><svg width="9" height="9" viewBox="0 0 10 10"><path d="M0 3.500h6v3.500H0zM0 0v1.500h6V0M0 10V8.500h6V10M8.500 0v10M8.500 3h1.500v2H8.500" stroke-width=".9"/></svg></button>
<button class="run" aria-label="Edge"><svg class="s12" viewBox="0 0 24 24"><circle cx="12" cy="12" r="11.500" fill="#1384d0" stroke="none"/><path d="M2 8C5-1 21-2 23 11c0 5-6 6-9 4 3-5-4-10-12-7z" fill="#3fcc70" stroke="none"/><path d="M9 10c-3 9 4 12 12 10-8 7-20 1-19-10 2-3 5-2 7 0z" fill="#0b55a5" stroke="none"/></svg></button>
<button class="run" aria-label="Chrome"><svg class="s12" viewBox="0 0 24 24"><circle cx="12" cy="12" r="11.500" fill="#e33b2e" stroke="none"/><path d="M2 6l7 11-1 6C1 21-2 13 2 6z" fill="#2ba14b" stroke="none"/><path d="M12 7h11c3 9-5 18-13 16l6-9z" fill="#f9ce2d" stroke="none"/><circle cx="12" cy="12" r="5" fill="#4285f4" stroke="#fff" stroke-width="1.500"/></svg></button>
<button class="run" aria-label="탐색기"><svg class="s12" viewBox="0 0 24 24"><path d="M1 3h8l2 3h12v15H1z" fill="#f5bf45" stroke="none"/><path d="M1 9h22v12H1z" fill="#ffda70" stroke="none"/><path d="M5 22v-8h14v8h-4v-4H9v4z" fill="#3f93d5" stroke="none"/></svg></button>
<button class="run" aria-label="카카오톡"><svg class="s12" viewBox="0 0 24 24"><rect width="24" height="24" fill="#fbe000" stroke="none"/><ellipse cx="12" cy="11" rx="9" ry="7" fill="#3a2314" stroke="none"/><path d="M7 15l-1 6 6-4z" fill="#3a2314" stroke="none"/><path d="M6 10h3M8 10v4M11 14l1-4 1 4M15 10v4h3" stroke="#fbe000" stroke-width="1"/></svg></button>
<button class="run on" aria-label="CLIP STUDIO PAINT"><svg class="s12" viewBox="0 0 24 24"><path d="M4 4c7-4 17-1 18 5 0 6-11 8-16 5-5-3-2-8 5-8 6 0 6 5 1 5M12 15v6l5 1" stroke="#333" stroke-width="2.600"/></svg></button>
<div class="tray d-flex align-items-center ms-auto">
<button aria-label="숨겨진 아이콘"><svg class="s8" viewBox="0 0 8 8"><path d="M1 6l3-3 3 3" stroke-width="1"/></svg></button><button aria-label="카메라"><svg class="s8" viewBox="0 0 8 8"><path d="M1 2h5v4H1zM6 3h1v2H6M2 0h3M2 8h3M3 3v2" stroke-width=".9"/></svg></button><button aria-label="네트워크"><svg class="s8" viewBox="0 0 8 8"><path d="M2 1h6v4H3M4 7h4M6 5v2" stroke-width=".9"/><path class="fs" d="M0 0h3v4H0z"/></svg></button><button aria-label="볼륨"><svg class="s8" viewBox="0 0 8 8"><path d="M0 3h1l2-2v6L1 5H0zM4 3v2M6 2q1 2 0 4M7 1q2 3 0 6" stroke-width=".8"/></svg></button><button aria-label="입력기" class="ime">A</button>
<div class="clock text-center"><div>오후 10:33</div><div>2021-04-22</div></div><button class="note" aria-label="알림"><svg width="9" height="9" viewBox="0 0 10 10"><path d="M1 1h8v7H6L5 9.500 4 8H1z" stroke-width="1"/></svg></button><span class="ms-1"></span></div>
</footer>
</body>
</html>
